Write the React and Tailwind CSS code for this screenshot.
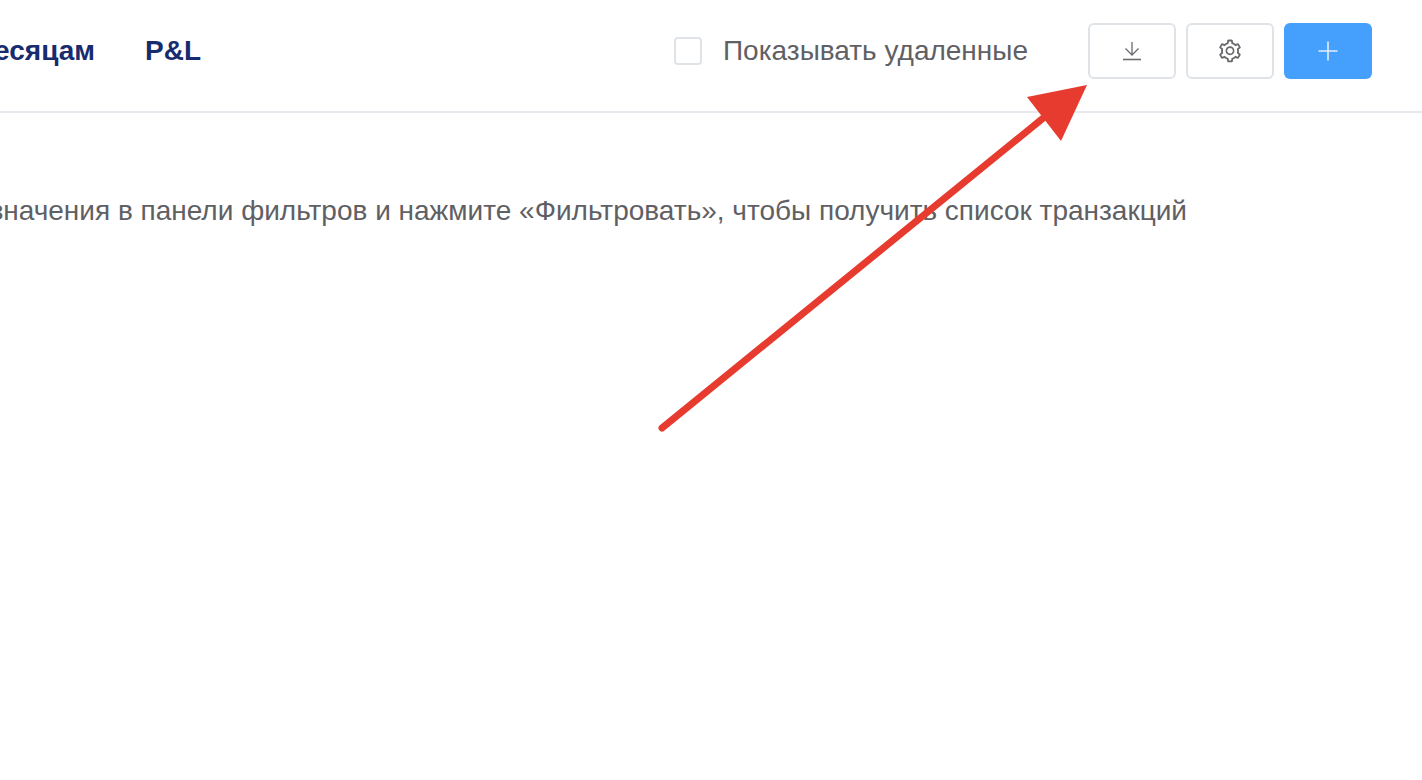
import React from "react";
import { AiOutlineSetting } from "react-icons/ai";

function DownloadIcon() {
  return (
    <svg width="20" height="20" viewBox="0 0 20 20" fill="none" stroke="#6b6b70">
      <path d="M10 1v12.5M3.5 7.5l6.5 6.5 6.5-6.5" strokeWidth="1.3" />
      <path d="M1 18.5h18" strokeWidth="1.6" />
    </svg>
  );
}

function PlusIcon() {
  return (
    <svg width="20" height="20" viewBox="0 0 20 20" fill="none" stroke="#e3eefb" strokeWidth="1.6">
      <path d="M10 0.5v19M0.5 10h19" />
    </svg>
  );
}

function Arrow() {
  return (
    <svg className="absolute left-0 top-0 pointer-events-none" width="1422" height="780" viewBox="0 0 1422 780" fill="none">
      <path d="M662 428L1058 106" stroke="#e83b30" strokeWidth="7" strokeLinecap="round" />
      <polygon points="1087,85 1027,97 1061,141" fill="#e83b30" />
    </svg>
  );
}

export default function App() {
  return (
    <div className="relative h-[780px] w-[1422px] overflow-hidden bg-white font-['Liberation_Sans',Arial,sans-serif]">
      <header className="flex h-[113px] items-center justify-between border-b-2 border-[#e6e9ed] pb-[10px] pr-[50px]">
        <nav className="flex w-[201px] shrink-0 justify-end gap-[50px] overflow-hidden whitespace-nowrap text-[28px] font-bold text-[#182b6e]">
          <span>По месяцам</span>
          <span>P&amp;L</span>
        </nav>

        <div className="flex items-center">
          <label className="mr-[60px] flex items-center gap-[21px] text-[28px] text-[#5f6064]">
            <span className="h-[28px] w-[28px] rounded-[4px] border-2 border-[#dfe3e8] bg-white" />
            Показывать удаленные
          </label>
          <div className="flex gap-[10px]">
            <button className="flex h-[56px] w-[88px] items-center justify-center rounded-[6px] border-2 border-[#dfe3e8] bg-white">
              <DownloadIcon />
            </button>
            <button className="flex h-[56px] w-[88px] items-center justify-center rounded-[6px] border-2 border-[#dfe3e8] bg-white text-[#68686d]">
              <AiOutlineSetting size={26} />
            </button>
            <button className="flex h-[56px] w-[88px] items-center justify-center rounded-[6px] bg-[#459ffc]">
              <PlusIcon />
            </button>
          </div>
        </div>
      </header>

      <main className="flex justify-end overflow-hidden whitespace-nowrap pr-[235px] pt-[82px] text-[28px] leading-[32px] text-[#5f6064]">
        <p>Задайте значения в панели фильтров и нажмите «Фильтровать», чтобы получить список транзакций</p>
      </main>

      <Arrow />
    </div>
  );
}
